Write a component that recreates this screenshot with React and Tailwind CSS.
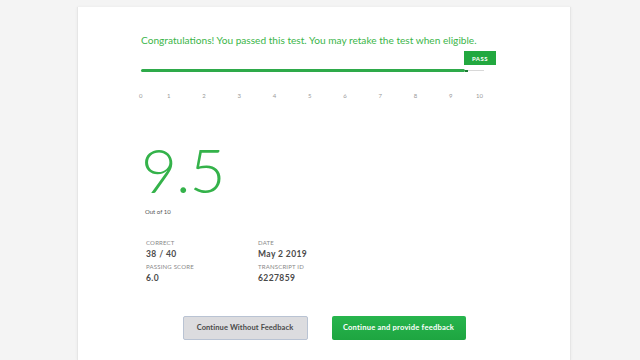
import React from 'react';

const ticks = ['0', '1', '2', '3', '4', '5', '6', '7', '8', '9', '10'];

const stats = [
  { label: 'Correct', value: '38 / 40' },
  { label: 'Date', value: 'May 2 2019' },
  { label: 'Passing Score', value: '6.0' },
  { label: 'Transcript ID', value: '6227859' },
];

export default function App() {
  return (
    <div className="min-h-screen bg-[#f4f4f4] pt-[7px] font-['Lato',sans-serif]">
      <div className="ml-[77px] w-[494px] min-h-[353px] bg-white border-x border-[#e6e6e6] shadow-[0_0_3px_rgba(0,0,0,0.05)]">
        {/* Result header */}
        <div className="pl-[63px] pt-[25px]">
          <p className="text-[10.15px] leading-[16px] text-[#3bb54a]">
            Congratulations! You passed this test. You may retake the test when eligible.
          </p>

          {/* Score bar */}
          <div className="mt-[3px] w-[343px]">
            <div className="ml-[323px] flex h-[14px] w-[32px] items-center justify-center bg-[#22a83f] text-[6px] font-bold tracking-[0.5px] text-white">
              PASS
            </div>
            <div className="mt-[4px] flex items-center">
              <div className="h-[3px] w-[324px] rounded-full bg-[#2eaa4a]" />
              <div className="h-[2px] w-[3px] bg-[#1d7a33]" />
              <div className="h-[1px] flex-1 bg-[#d8d8d8]" />
            </div>
            <div className="-ml-[2px] mt-[20px] flex text-[6px] leading-[8px] text-[#9a9a9a]">
              {ticks.map((t, i) => (
                <span
                  key={t}
                  className={i === 0 ? 'w-[28px] shrink-0' : i === 10 ? 'shrink-0' : i === 9 ? 'w-[27px] shrink-0' : 'w-[35.25px] shrink-0'}
                >
                  {t}
                </span>
              ))}
            </div>
          </div>

          {/* Score */}
          <div className="mt-[38px] text-[62px] font-light leading-[62px] tracking-[-1px] text-[#34b24a]">
            9.5
          </div>
          <p className="ml-[4px] mt-[8px] text-[6px] leading-[8px] text-[#555]">Out of 10</p>

          {/* Details */}
          <div className="ml-[5px] mt-[23px] grid w-[224px] grid-cols-2 gap-y-[3px]">
            {stats.map((s) => (
              <div key={s.label}>
                <p className="text-[6px] uppercase leading-[8px] tracking-[0.2px] text-[#888]">{s.label}</p>
                <p className="mt-[2px] text-[8.5px] font-bold leading-[11px] tracking-[0.4px] text-[#4a4a4a]">{s.value}</p>
              </div>
            ))}
          </div>
        </div>

        {/* Actions */}
        <div className="mt-[32px] flex justify-center gap-[24px] pb-[20px]">
          <button className="h-[24px] w-[125px] rounded-[2px] border border-[#b9c3d3] bg-[#dcdcdf] text-[7.5px] font-bold tracking-[0.1px] text-[#4a4a4a]">
            Continue Without Feedback
          </button>
          <button className="h-[24px] w-[134px] rounded-[2px] bg-gradient-to-b from-[#27b54d] to-[#1ea541] text-[7.6px] font-bold tracking-[0.2px] text-white">
            Continue and provide feedback
          </button>
        </div>
      </div>
    </div>
  );
}
